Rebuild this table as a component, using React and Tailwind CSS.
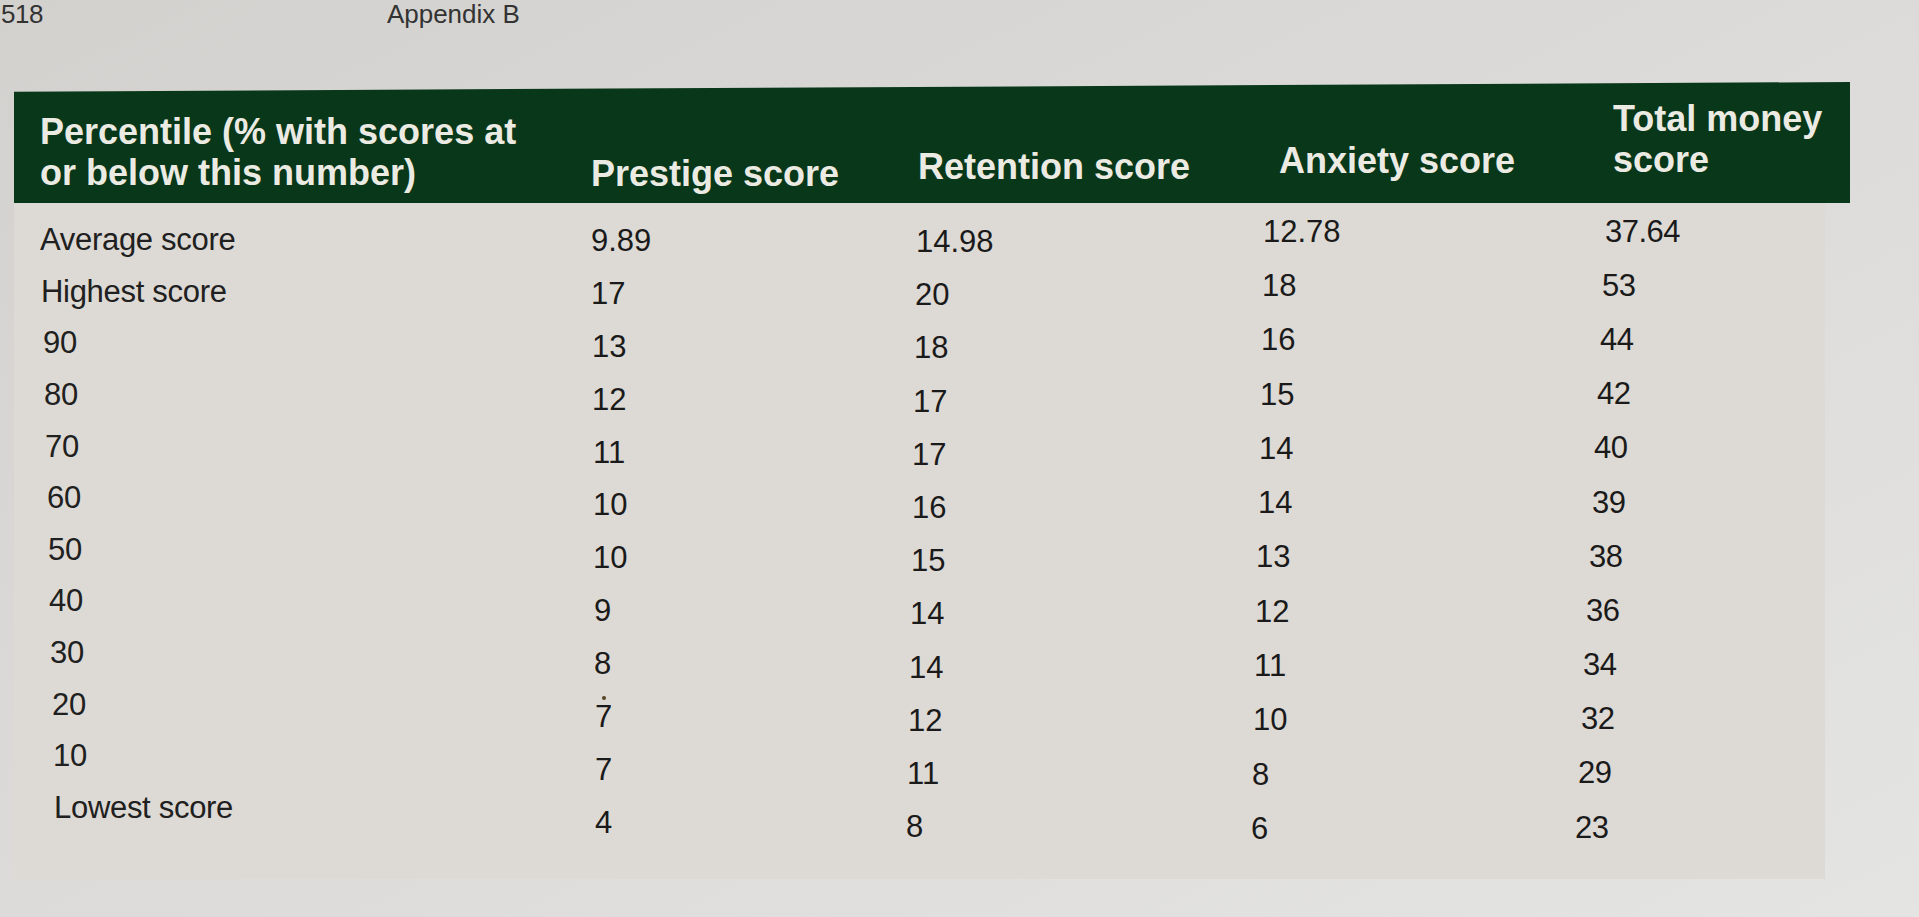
const ROWS = [
  ["Average score", "9.89", "14.98", "12.78", "37.64"],
  ["Highest score", "17", "20", "18", "53"],
  ["90", "13", "18", "16", "44"],
  ["80", "12", "17", "15", "42"],
  ["70", "11", "17", "14", "40"],
  ["60", "10", "16", "14", "39"],
  ["50", "10", "15", "13", "38"],
  ["40", "9", "14", "12", "36"],
  ["30", "8", "14", "11", "34"],
  ["20", "7", "12", "10", "32"],
  ["10", "7", "11", "8", "29"],
  ["Lowest score", "4", "8", "6", "23"],
];

// photo perspective: each column has its own row pitch and a slight sideways drift
const COLS = [
  { w: "w-[577px]", pad: "pl-[26px] pt-[11px]", row: "h-[51.6px]", drift: 1.3, text: "tracking-[-0.3px] text-[#202020]" },
  { w: "w-[325px]", pad: "pt-[11px]", row: "h-[52.9px]", drift: 0.4, text: "text-[#1a1a1a]" },
  { w: "w-[347px]", pad: "pt-[12px]", row: "h-[53.2px]", drift: -0.9, text: "text-[#1a1a1a]" },
  { w: "w-[342px]", pad: "pt-[1px]", row: "h-[54.3px]", drift: -1.1, text: "text-[#1a1a1a]" },
  { w: "flex-1", pad: "pt-[1px]", row: "h-[54.2px]", drift: -2.7, text: "tracking-[-0.5px] text-[#1a1a1a]" },
];

function BodyColumn({ col, idx }) {
  return (
    <div className={"flex flex-col " + col.w + " " + col.pad}>
      {ROWS.map((r, i) => (
        <div key={i} className={"flex items-center text-[31px] leading-none " + col.row + " " + col.text}
          style={{ paddingLeft: Math.max(0, Math.round(i * col.drift + (col.drift < 0 ? 30 : 0))) + "px", marginLeft: col.drift < 0 ? "-30px" : 0 }}>
          <span className="relative">
            {r[idx]}
            {idx === 1 && i === 9 && <span className="absolute left-[7px] -top-[5px] w-[4px] h-[4px] rounded-full bg-[#554422]"></span>}
          </span>
        </div>
      ))}
    </div>
  );
}

export default function App() {
  return (
    <div className="w-[1919px] h-[917px] overflow-hidden bg-gradient-to-br from-[#d3d1ce] via-[#dcdbd9] to-[#e4e4e3] font-['Liberation_Sans',Arial,sans-serif]">
      <div className="h-[82px] flex items-start text-[26px] leading-[28px] text-[#333]">
        <span className="ml-[1px] tracking-[-0.5px]">518</span>
        <span className="ml-[344px]">Appendix B</span>
      </div>

      <div className="ml-[14px] w-[1836px]">
        <div className="h-[121px] bg-[#083719] flex items-stretch text-[36px] font-bold leading-[41px] text-[#ecebe3] [clip-path:polygon(0_8%,100%_0,100%_100%,0_100%)]">
          <div className="w-[577px] pl-[26px] pb-[10px] flex flex-col justify-end">
            <span>Percentile (% with scores at</span>
            <span>or below this number)</span>
          </div>
          <div className="w-[327px] pb-[9px] flex items-end">Prestige score</div>
          <div className="w-[361px] pb-[16px] flex items-end">Retention score</div>
          <div className="w-[334px] pb-[22px] flex items-end">Anxiety score</div>
          <div className="flex-1 pb-[23px] flex flex-col justify-end">
            <span>Total money</span>
            <span>score</span>
          </div>
        </div>

        <div className="w-[1811px] h-[676px] bg-[#ddd9d4] flex">
          {COLS.map((c, i) => (
            <BodyColumn key={i} col={c} idx={i} />
          ))}
        </div>
      </div>
    </div>
  );
}
